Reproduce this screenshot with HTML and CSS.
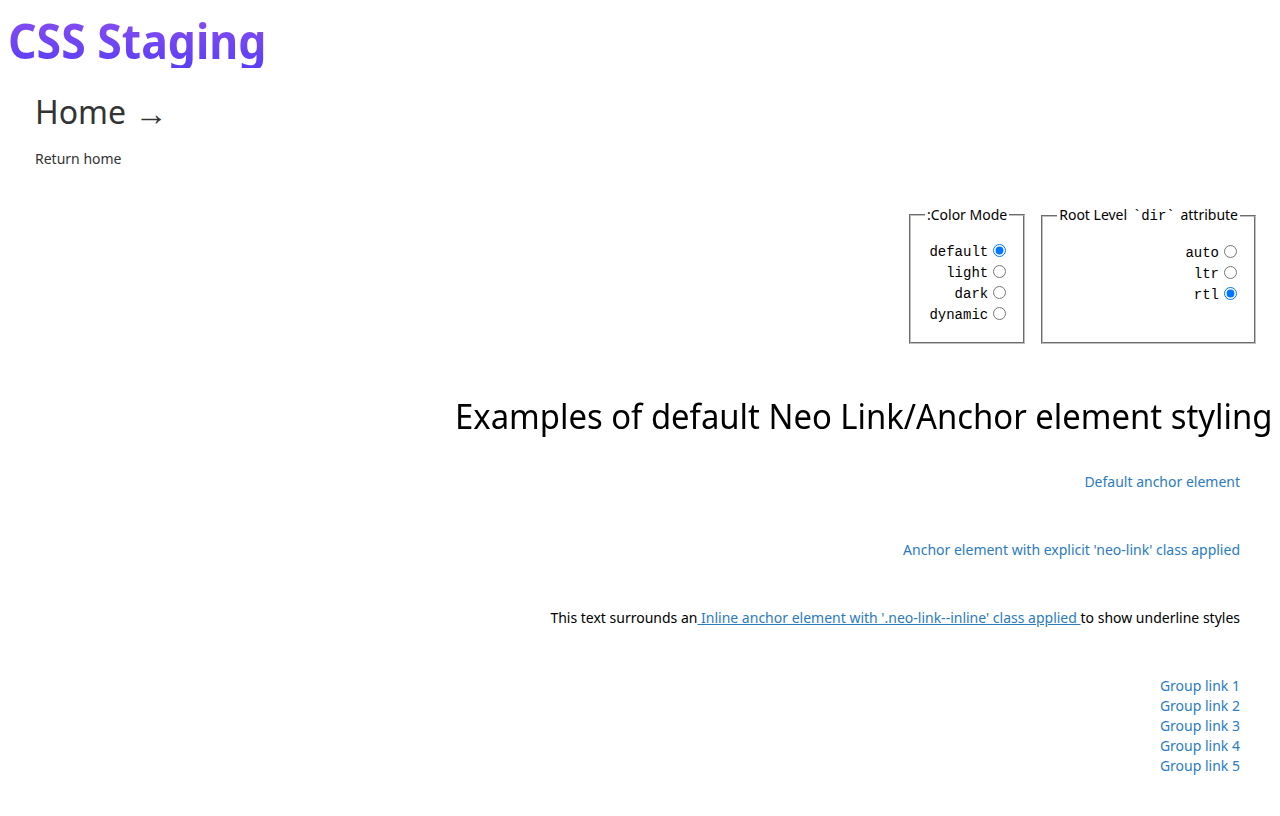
FILE: index.html
```html
<!DOCTYPE html>
<html lang="en" dir="rtl">
<head>
<meta charset="utf-8">
<title>CSS Staging</title>
<link rel="stylesheet" href="styles.css">
</head>
<body>
<header class="site-header" dir="ltr">
  <h1 class="brand">CSS Staging</h1>
  <div class="page-nav">
    <h2 class="page-title">Home <span class="arrow">→</span></h2>
    <a class="return-link" href="#">Return home</a>
  </div>
</header>
<div class="controls">
  <fieldset class="control-set">
    <legend>Root Level <code>`dir`</code> attribute</legend>
    <div class="options">
      <label class="option"><input type="radio" name="dir"><span>auto</span></label>
      <label class="option"><input type="radio" name="dir"><span>ltr</span></label>
      <label class="option"><input type="radio" name="dir" checked><span>rtl</span></label>
    </div>
  </fieldset>
  <fieldset class="control-set">
    <legend>Color Mode:</legend>
    <div class="options">
      <label class="option"><input type="radio" name="mode" checked><span>default</span></label>
      <label class="option"><input type="radio" name="mode"><span>light</span></label>
      <label class="option"><input type="radio" name="mode"><span>dark</span></label>
      <label class="option"><input type="radio" name="mode"><span>dynamic</span></label>
    </div>
  </fieldset>
</div>
<main class="examples">
  <h2 class="examples-title"><span class="examples-title-text">Examples of default Neo Link/Anchor element styling</span></h2>
  <div class="example"><a href="#">Default anchor element</a></div>
  <div class="example"><a class="neo-link" href="#">Anchor element with explicit 'neo-link' class applied</a></div>
  <div class="example"><p class="inline-text">This text surrounds an<a class="neo-link neo-link--inline" href="#"> Inline anchor element with '.neo-link--inline' class applied </a>to show underline styles</p></div>
  <div class="example group">
    <a href="#">Group link 1</a>
    <a href="#">Group link 2</a>
    <a href="#">Group link 3</a>
    <a href="#">Group link 4</a>
    <a href="#">Group link 5</a>
  </div>
</main>
</body>
</html>
```
FILE: styles.css
```css
body {
  margin: 8px;
  font-family: "Noto Sans", sans-serif;
  color: #000;
  background: #fff;
}
.site-header {
  text-align: left;
}
.brand {
  margin: 0;
  padding-top: 2px;
  font-size: 48px;
  font-weight: 700;
  line-height: 66px;
  height: 60px;
  background: linear-gradient(to bottom, #9150ef, #5a3ef6);
  -webkit-background-clip: text;
  background-clip: text;
  color: transparent;
  display: inline-block;
  transform: scaleX(0.928);
  transform-origin: left top;
  margin-top: -2px;
}
.page-nav {
  padding: 0 27px;
}
.page-title {
  margin: 22px 0 0;
  font-size: 32px;
  font-weight: 400;
  color: #333;
  line-height: 44px;
}
.arrow {
  font-family: "Liberation Sans", sans-serif;
  font-size: 33px;
  position: relative;
  top: 1px;
}
.return-link {
  display: inline-block;
  margin-top: 14px;
  font-size: 14px;
  color: #333;
  text-decoration: none;
  line-height: 20px;
}
.controls {
  display: flex;
  gap: 16px;
  padding: 0 16px;
  margin-top: 36px;
}
.control-set {
  margin: 0;
  padding: 0 14px 9px;
  border: 2px groove #c0c0c0;
  font-size: 14px;
}
.control-set legend {
  padding: 0 2px;
  line-height: 20px;
}
.control-set code {
  font-family: "Liberation Mono", monospace;
  font-size: 14px;
  margin: 0 2px;
}
.options {
  display: flex;
  flex-direction: column;
  padding-top: 16px;
  padding-bottom: 8px;
}
.option {
  display: flex;
  align-items: center;
  height: 21px;
  font-family: "Liberation Mono", monospace;
  font-size: 14px;
}
.option input {
  margin: 0 3px 3px 5px;
  width: 13px;
  height: 13px;
}
.examples {
  margin-top: 50px;
}
.examples-title {
  margin: 0 0 10px;
  font-size: 35px;
  font-weight: 400;
  line-height: 44px;
  white-space: nowrap;
}
.examples-title-text {
  display: inline-block;
  transform: scaleX(0.938);
  transform-origin: right center;
}
.example {
  padding: 24px 32px 24px 0;
  font-size: 14px;
  line-height: 20px;
}
.example a {
  color: #2b7bc0;
  text-decoration: none;
}
.inline-text {
  margin: 0;
}
.example a.neo-link--inline {
  text-decoration: underline;
}
.group {
  display: flex;
  flex-direction: column;
  align-items: flex-start;
}
```
